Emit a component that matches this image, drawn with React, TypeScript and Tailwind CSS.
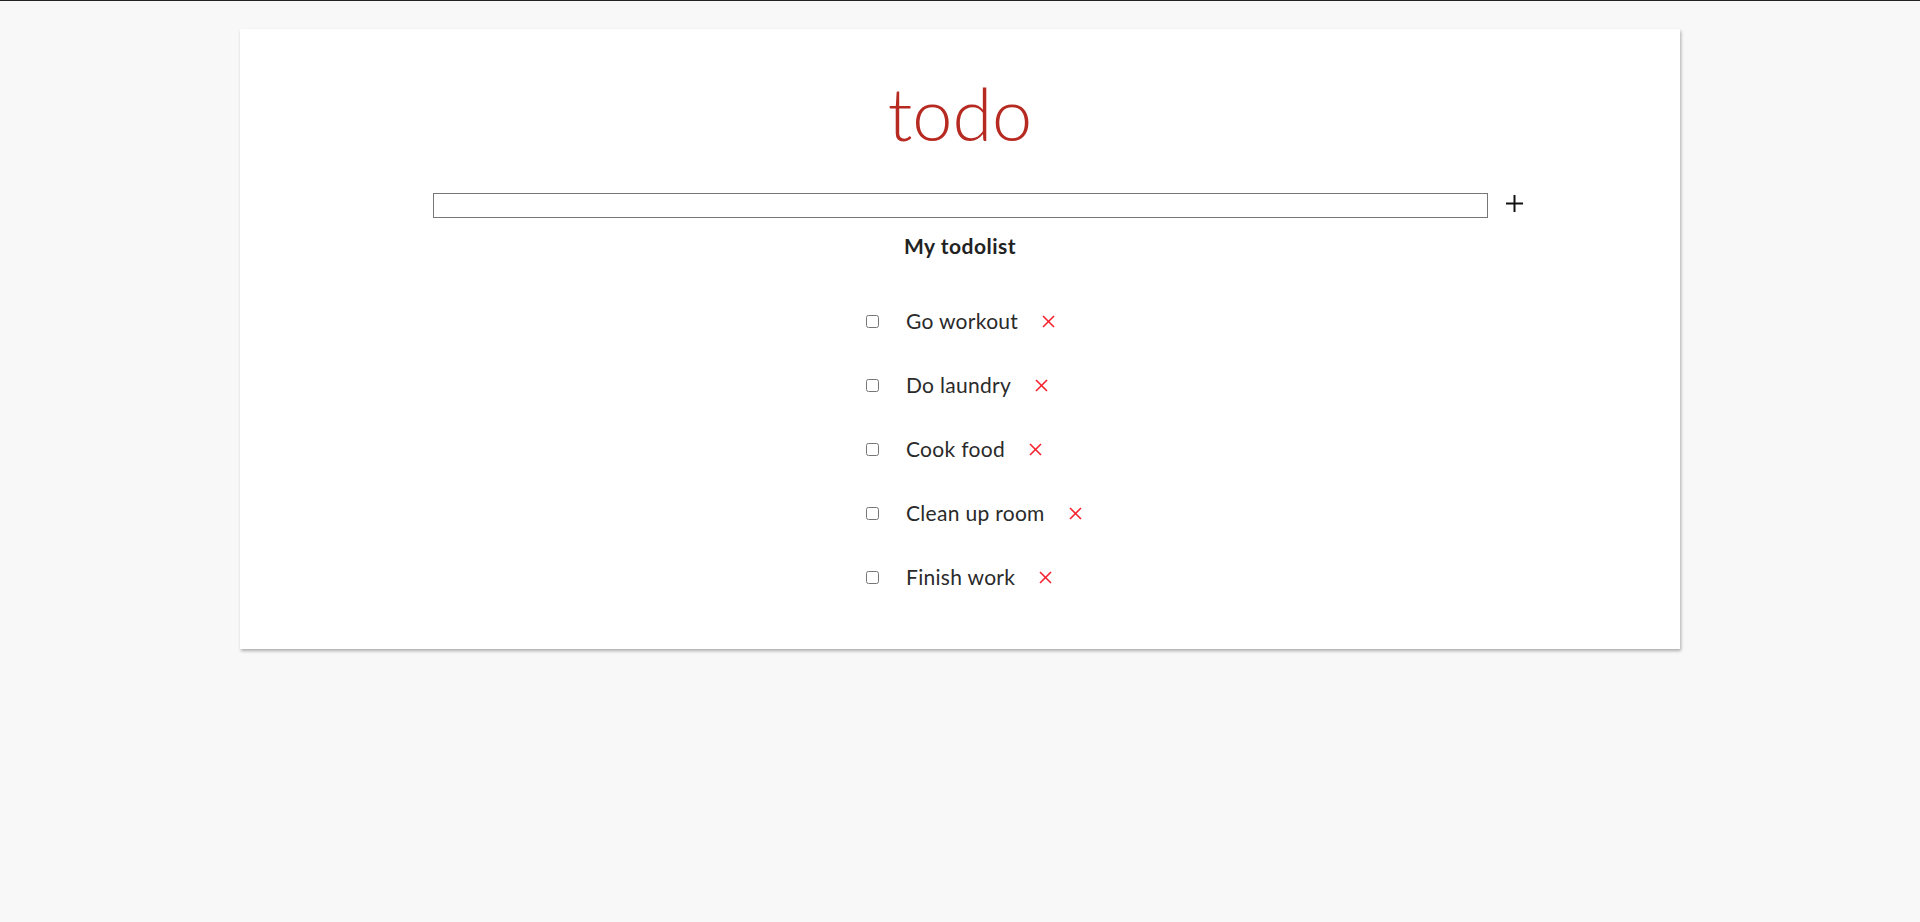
import { useState } from 'react';

type Todo = {
  id: number;
  text: string;
  done: boolean;
};

const initialTodos: Todo[] = [
  { id: 1, text: 'Go workout', done: false },
  { id: 2, text: 'Do laundry', done: false },
  { id: 3, text: 'Cook food', done: false },
  { id: 4, text: 'Clean up room', done: false },
  { id: 5, text: 'Finish work', done: false },
];

function PlusIcon() {
  return (
    <svg width="19" height="19" viewBox="0 0 19 19" aria-hidden="true">
      <line x1="9.5" y1="1" x2="9.5" y2="18" stroke="#111" strokeWidth="2" />
      <line x1="1" y1="9.5" x2="18" y2="9.5" stroke="#111" strokeWidth="2" />
    </svg>
  );
}

function CrossIcon() {
  return (
    <svg width="13" height="13" viewBox="0 0 13 13" aria-hidden="true">
      <line x1="1" y1="1" x2="12" y2="12" stroke="#f5222d" strokeWidth="1.6" />
      <line x1="12" y1="1" x2="1" y2="12" stroke="#f5222d" strokeWidth="1.6" />
    </svg>
  );
}

export default function App() {
  const [todos, setTodos] = useState<Todo[]>(initialTodos);
  const [text, setText] = useState('');

  const addTodo = () => {
    if (!text.trim()) return;
    setTodos([...todos, { id: Date.now(), text: text.trim(), done: false }]);
    setText('');
  };

  const toggle = (id: number) => {
    setTodos(todos.map((t) => (t.id === id ? { ...t, done: !t.done } : t)));
  };

  const remove = (id: number) => {
    setTodos(todos.filter((t) => t.id !== id));
  };

  return (
    <div className="min-h-screen border-t border-[#222] bg-[#f8f8f8] pt-[28px] font-['Lato',sans-serif] text-[#222]">
      <div className="mx-auto w-[1440px] bg-white pt-[48px] pb-[40px] shadow-[1px_2px_3px_rgba(0,0,0,0.3)]">
        <h1 className="text-center text-[72px] font-light leading-none text-[#b72a22]">todo</h1>

        <div className="mt-[44px] grid grid-cols-[1fr_auto_1fr] items-center">
          <div />
          <input
            type="text"
            value={text}
            onChange={(e) => setText(e.target.value)}
            className="h-[25px] w-[1055px] border border-[#767676] px-1 text-[15px] outline-none"
          />
          <button onClick={addTodo} className="ml-[17px] flex h-[19px] w-[19px] items-center justify-start justify-self-start -translate-y-[2px]">
            <PlusIcon />
          </button>
        </div>

        <h2 className="mt-[16px] text-center text-[21px] font-bold leading-[24px] tracking-[0.5px]">My todolist</h2>

        <ul className="mx-auto mt-[31px] w-[268px] pl-[40px]">
          {todos.map((todo) => (
            <li key={todo.id} className="flex h-[64px] items-center">
              <input
                type="checkbox"
                checked={todo.done}
                onChange={() => toggle(todo.id)}
                className="m-0 h-[13px] w-[13px] shrink-0"
              />
              <span
                className={
                  'ml-[27px] text-[21px] tracking-[0.3px] ' + (todo.done ? 'text-gray-400 line-through' : 'text-[#2a2a2a]')
                }
              >
                {todo.text}
              </span>
              <button onClick={() => remove(todo.id)} className="ml-[24px] flex h-[13px] w-[13px] items-center justify-center">
                <CrossIcon />
              </button>
            </li>
          ))}
        </ul>
      </div>
    </div>
  );
}
